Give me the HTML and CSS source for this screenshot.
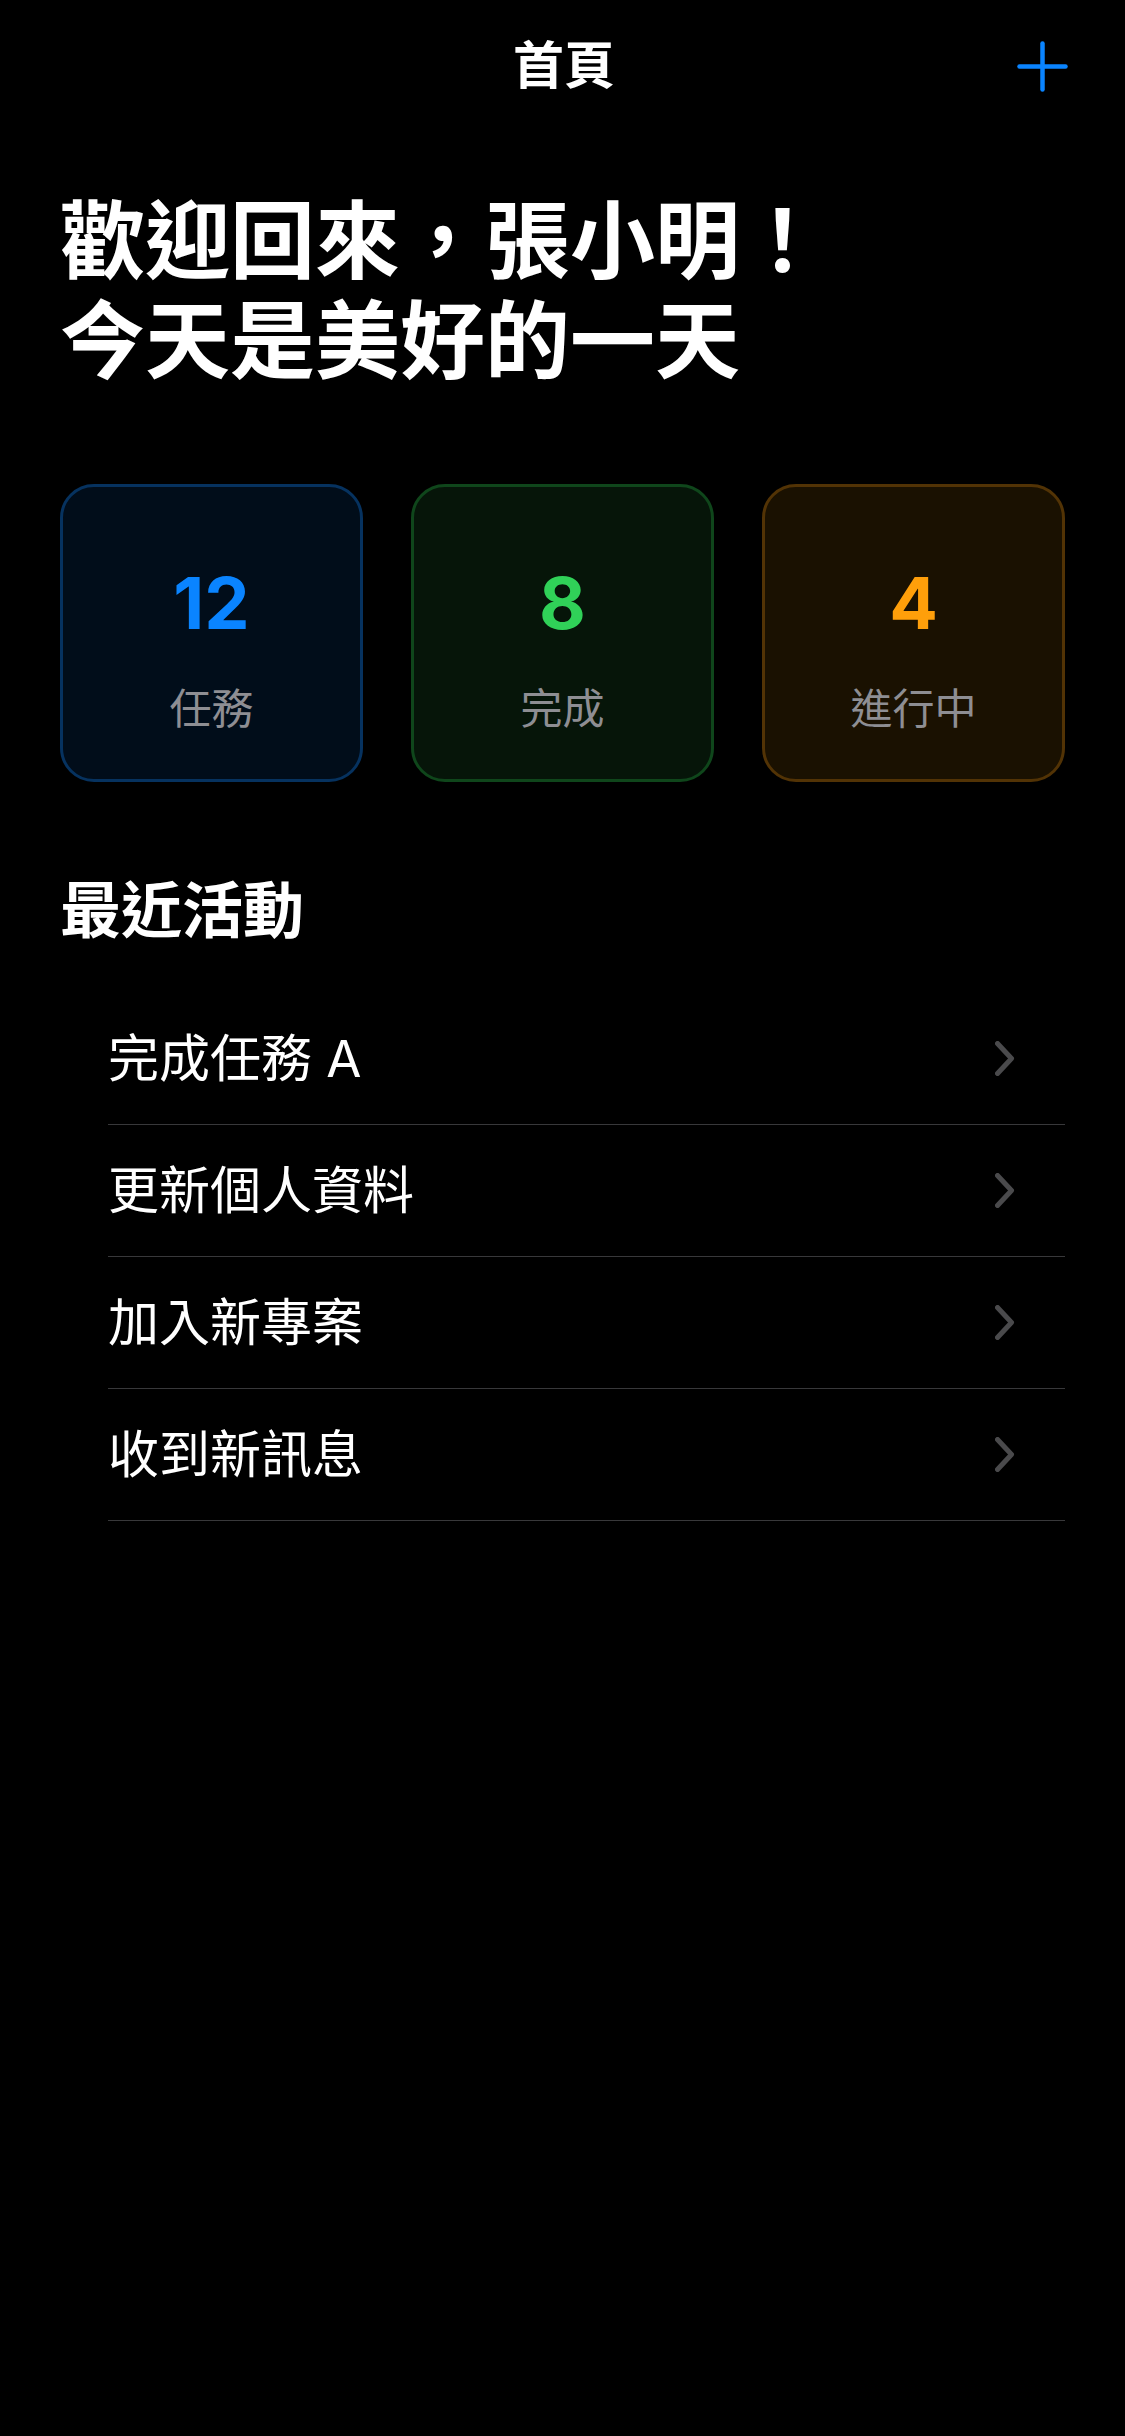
FILE: index.html
```html
<!DOCTYPE html>
<html lang="zh-Hant">
<head>
<meta charset="utf-8">
<title>首頁</title>
<link rel="stylesheet" href="styles.css">
</head>
<body>
<div class="screen">
  <header class="nav">
    <div class="nav-side"></div>
    <h1 class="nav-title">首頁</h1>
    <div class="nav-side nav-right">
      <svg class="plus" width="51" height="51" viewBox="0 0 51 51" aria-label="新增">
        <line x1="25.5" y1="2.5" x2="25.5" y2="48.5"/>
        <line x1="2.5" y1="25.5" x2="48.5" y2="25.5"/>
      </svg>
    </div>
  </header>

  <main class="content">
    <h2 class="greeting">歡迎回來，張小明！<br>今天是美好的一天</h2>

    <section class="stats">
      <div class="stat stat-blue">
        <div class="stat-num">12</div>
        <div class="stat-label">任務</div>
      </div>
      <div class="stat stat-green">
        <div class="stat-num">8</div>
        <div class="stat-label">完成</div>
      </div>
      <div class="stat stat-orange">
        <div class="stat-num">4</div>
        <div class="stat-label">進行中</div>
      </div>
    </section>

    <h3 class="section-title">最近活動</h3>

    <ul class="list">
      <li class="row"><span class="row-text">完成任務 A</span>
        <svg class="chev" width="20" height="35" viewBox="0 0 20 35"><path d="M2.5 2.5 L16.5 17.5 L2.5 32.5"/></svg></li>
      <li class="row"><span class="row-text">更新個人資料</span>
        <svg class="chev" width="20" height="35" viewBox="0 0 20 35"><path d="M2.5 2.5 L16.5 17.5 L2.5 32.5"/></svg></li>
      <li class="row"><span class="row-text">加入新專案</span>
        <svg class="chev" width="20" height="35" viewBox="0 0 20 35"><path d="M2.5 2.5 L16.5 17.5 L2.5 32.5"/></svg></li>
      <li class="row"><span class="row-text">收到新訊息</span>
        <svg class="chev" width="20" height="35" viewBox="0 0 20 35"><path d="M2.5 2.5 L16.5 17.5 L2.5 32.5"/></svg></li>
    </ul>
  </main>
</div>
</body>
</html>
```

FILE: styles.css
```css
html, body {
  margin: 0;
  padding: 0;
  background: #000;
}

body {
  font-family: "Inter", "Noto Sans CJK TC", "Noto Sans", sans-serif;
  color: #fff;
}

.screen {
  width: 1125px;
  min-height: 2436px;
  background: #000;
}

.nav {
  height: 132px;
  display: grid;
  grid-template-columns: 1fr auto 1fr;
  align-items: center;
  padding: 0 57px 0 60px;
}

.nav-title {
  margin: 0;
  font-size: 51px;
  line-height: 60px;
  font-weight: 700;
  color: #fff;
  text-align: center;
}

.nav-right {
  display: flex;
  justify-content: flex-end;
  align-items: center;
}

.plus {
  display: block;
  stroke: #0A84FF;
  stroke-width: 4.5;
  stroke-linecap: round;
}

.content {
  padding: 0 60px;
}

.greeting {
  margin: 60px 0 0 0;
  font-size: 85px;
  line-height: 100px;
  font-weight: 700;
  color: #fff;
}

.stats {
  margin-top: 92px;
  display: grid;
  grid-template-columns: repeat(3, 1fr);
  gap: 48px;
}

.stat {
  box-sizing: border-box;
  height: 298px;
  border-radius: 34px;
  border: 3px solid;
  padding-top: 73px;
  display: flex;
  flex-direction: column;
  align-items: center;
}

.stat-blue {
  background: #010d1a;
  border-color: #06325f;
}

.stat-green {
  background: #061509;
  border-color: #0f461b;
}

.stat-orange {
  background: #1a1101;
  border-color: #523305;
}

.stat-num {
  font-size: 72px;
  line-height: 86px;
  font-weight: 700;
}

.stat-blue .stat-num { color: #0A84FF; }
.stat-green .stat-num { color: #30D158; }
.stat-orange .stat-num { color: #FF9F0A; }

.stat-label {
  margin-top: 38px;
  font-size: 42px;
  line-height: 50px;
  font-weight: 400;
  color: #8e8e93;
}

.section-title {
  margin: 93px 0 0 0;
  font-size: 61px;
  line-height: 72px;
  font-weight: 700;
  color: #fff;
}

.list {
  list-style: none;
  margin: 46px 0 0 48px;
  padding: 0;
}

.row {
  box-sizing: border-box;
  height: 132px;
  border-bottom: 1px solid #38383a;
  display: flex;
  align-items: center;
  justify-content: space-between;
  padding-right: 50px;
}

.row-text {
  font-size: 51px;
  line-height: 60px;
  font-weight: 400;
  color: #fff;
}

.chev {
  display: block;
  fill: none;
  stroke: #4a4a4c;
  stroke-width: 5;
  stroke-linecap: round;
  stroke-linejoin: round;
}
```
